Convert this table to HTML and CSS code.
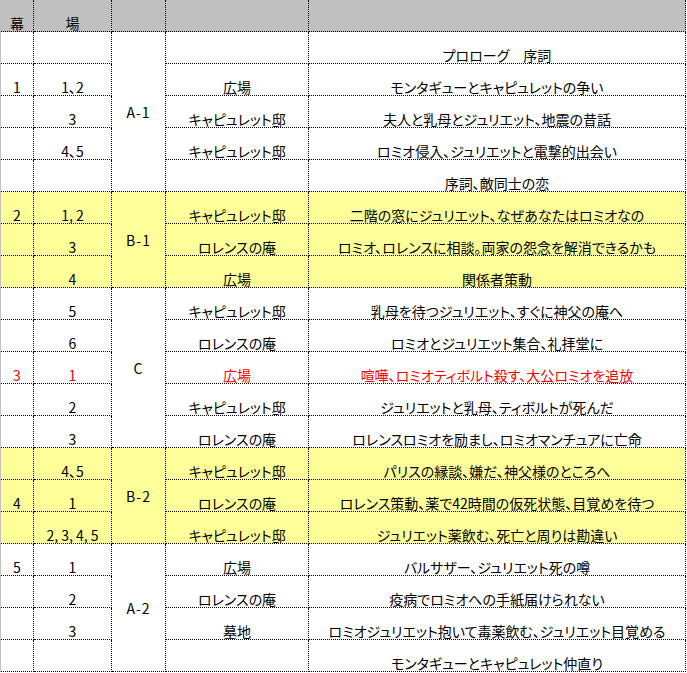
FILE: index.html
```html
<!DOCTYPE html>
<html lang="ja">
<head>
<meta charset="utf-8">
<title>ロミオとジュリエット 場割</title>
<link rel="stylesheet" href="styles.css">
</head>
<body>
<div class="wrap">
<table class="sheet">
<colgroup>
<col class="c1"><col class="c2"><col class="c3"><col class="c4"><col class="c5">
</colgroup>
<thead>
<tr class="hd"><th>幕</th><th>場</th><th></th><th></th><th></th></tr>
</thead>
<tbody>
<tr><td></td><td></td><td class="m" rowspan="5">A-1</td><td></td><td>プロローグ　序詞</td></tr>
<tr><td>1</td><td>1、2</td><td>広場</td><td>モンタギューとキャピュレットの争い</td></tr>
<tr><td></td><td>3</td><td>キャピュレット邸</td><td>夫人と乳母とジュリエット、地震の昔話</td></tr>
<tr><td></td><td>4、5</td><td>キャピュレット邸</td><td>ロミオ侵入、ジュリエットと電撃的出会い</td></tr>
<tr><td></td><td></td><td></td><td>序詞、敵同士の恋</td></tr>

<tr class="y"><td>2</td><td>1, 2</td><td class="m" rowspan="3">B-1</td><td>キャピュレット邸</td><td>二階の窓にジュリエット、なぜあなたはロミオなの</td></tr>
<tr class="y"><td></td><td>3</td><td>ロレンスの庵</td><td>ロミオ、ロレンスに相談。両家の怨念を解消できるかも</td></tr>
<tr class="y"><td></td><td>4</td><td>広場</td><td>関係者策動</td></tr>

<tr><td></td><td>5</td><td class="m" rowspan="5">C</td><td>キャピュレット邸</td><td>乳母を待つジュリエット、すぐに神父の庵へ</td></tr>
<tr><td></td><td>6</td><td>ロレンスの庵</td><td>ロミオとジュリエット集合、礼拝堂に</td></tr>
<tr class="r"><td>3</td><td>1</td><td>広場</td><td>喧嘩、ロミオティボルト殺す、大公ロミオを追放</td></tr>
<tr><td></td><td>2</td><td>キャピュレット邸</td><td>ジュリエットと乳母、ティボルトが死んだ</td></tr>
<tr><td></td><td>3</td><td>ロレンスの庵</td><td>ロレンスロミオを励まし、ロミオマンチュアに亡命</td></tr>

<tr class="y"><td></td><td>4、5</td><td class="m" rowspan="3">B-2</td><td>キャピュレット邸</td><td>パリスの縁談、嫌だ、神父様のところへ</td></tr>
<tr class="y"><td>4</td><td>1</td><td>ロレンスの庵</td><td>ロレンス策動、薬で42時間の仮死状態、目覚めを待つ</td></tr>
<tr class="y"><td></td><td>2, 3, 4, 5</td><td>キャピュレット邸</td><td>ジュリエット薬飲む、死亡と周りは勘違い</td></tr>

<tr><td>5</td><td>1</td><td class="m" rowspan="4">A-2</td><td>広場</td><td>バルサザー、ジュリエット死の噂</td></tr>
<tr><td></td><td>2</td><td>ロレンスの庵</td><td>疫病でロミオへの手紙届けられない</td></tr>
<tr><td></td><td>3</td><td>墓地</td><td>ロミオジュリエット抱いて毒薬飲む、ジュリエット目覚める</td></tr>
<tr><td></td><td></td><td></td><td>モンタギューとキャピュレット仲直り</td></tr>
</tbody>
</table>
</div>
</body>
</html>
```
FILE: styles.css
```css
html, body {
  margin: 0;
  padding: 0;
  background: #ffffff;
}

.wrap {
  border-left: 1px solid #c0c0c0;
  width: 685px;
}

.sheet {
  table-layout: fixed;
  border-collapse: separate;
  border-spacing: 0;
  width: 685px;
  font-family: "Noto Sans CJK JP", "Noto Sans", sans-serif;
  font-size: 14px;
  font-feature-settings: "palt";
  color: #000000;
}

.c1 { width: 33px; }
.c2 { width: 78px; }
.c3 { width: 54px; }
.c4 { width: 143px; }
.c5 { width: 377px; }

.sheet tr {
  height: 32px;
}

.sheet th,
.sheet td {
  box-sizing: border-box;
  padding: 0;
  border-right: 1px dotted #000000;
  border-bottom: 1px dotted #000000;
  text-align: center;
  vertical-align: bottom;
  line-height: 16px;
  font-weight: normal;
  white-space: nowrap;
  overflow: hidden;
}

.hd th {
  background: #c0c0c0;
}

.y td {
  background: #ffff99;
}

.r td {
  color: #ff0000;
}

.sheet td.m {
  vertical-align: middle;
  color: #000000;
  padding: 0;
  letter-spacing: 1px;
}
```
